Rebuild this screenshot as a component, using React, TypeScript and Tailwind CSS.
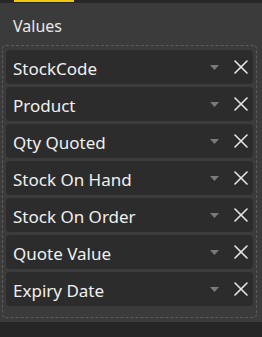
import { X } from 'lucide-react';

const fields = ['StockCode', 'Product', 'Qty Quoted', 'Stock On Hand', 'Stock On Order', 'Quote Value', 'Expiry Date'];

export default function App() {
  return (
    <div className="w-[262px] h-[337px] flex flex-col bg-[#3b3b3b] font-['Noto_Sans',sans-serif] overflow-hidden">
      <div className="h-[3px] bg-[#282828] flex">
        <div className="ml-[14px] w-[60px] h-[2px] bg-[#f2c811]" />
      </div>
      <div className="pl-[13px] pt-[13px] h-[42px] text-[16px] leading-[20px] text-[#e8e8e8]">Values</div>
      <div className="mx-[2px] w-[255px] border border-dashed border-[#5c5c5c] rounded-[4px] px-[3px] pt-[4px] pb-[11px] flex flex-col gap-[3px]">
        {fields.map((f) => (
          <div key={f} className="h-[34px] flex items-center bg-[#2c2c2c] rounded-[4px] pl-[7px]">
            <span className="flex-1 text-[17px] text-[#f0f0f0] leading-none pt-[3px]">{f}</span>
            <svg width="9" height="5" viewBox="0 0 9 5" className="mr-[10px]">
              <path d="M0 0h9L4.5 5z" fill="#7a7a7a" />
            </svg>
            <X size={24} strokeWidth={1.6} className="text-[#e6e6e6]" />
          </div>
        ))}
      </div>
      <div className="flex-1" />
      <div className="h-[15px] bg-[#262626]" />
    </div>
  );
}
